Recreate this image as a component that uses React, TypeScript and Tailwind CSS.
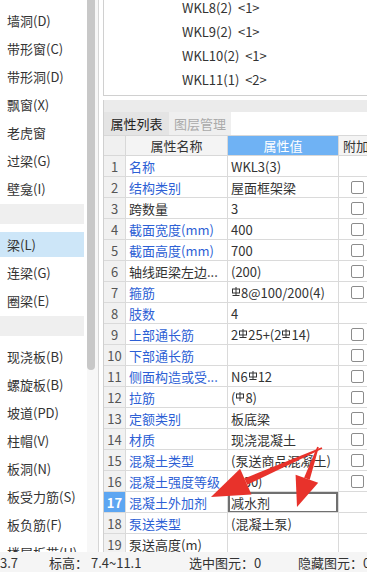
import React from "react";

const FONT = { fontFamily: '"Noto Sans CJK SC", "Microsoft YaHei", "Noto Sans", sans-serif' };

function Bar({ grade }: { grade: 3 | 4 }) {
  return (
    <svg width="8" height="10" viewBox="0 0 8 10" className="inline-block align-top mt-[1px] mx-[1px]">
      <rect x="0.5" y="2" width="7" height="4" fill="none" stroke="#333" strokeWidth="1" />
      <line x1="4" y1="0" x2="4" y2="9" stroke="#333" strokeWidth="1" />
      {grade === 4 && <line x1="0.5" y1="8.5" x2="7.5" y2="8.5" stroke="#333" strokeWidth="1" />}
    </svg>
  );
}

type Row = { n: number; name: string; blue: boolean; val: React.ReactNode; cb: boolean; sel?: boolean };

const rows: Row[] = [
  { n: 1, name: "名称", blue: true, val: "WKL3(3)", cb: false },
  { n: 2, name: "结构类别", blue: true, val: "屋面框架梁", cb: true },
  { n: 3, name: "跨数量", blue: false, val: "3", cb: true },
  { n: 4, name: "截面宽度(mm)", blue: true, val: "400", cb: true },
  { n: 5, name: "截面高度(mm)", blue: true, val: "700", cb: true },
  { n: 6, name: "轴线距梁左边...", blue: false, val: "(200)", cb: true },
  { n: 7, name: "箍筋", blue: true, val: (<span><Bar grade={4} />8@100/200(4)</span>), cb: true },
  { n: 8, name: "肢数", blue: true, val: "4", cb: false },
  { n: 9, name: "上部通长筋", blue: true, val: (<span>2<Bar grade={4} />25+(2<Bar grade={4} />14)</span>), cb: true },
  { n: 10, name: "下部通长筋", blue: true, val: "", cb: true },
  { n: 11, name: "侧面构造或受...", blue: true, val: (<span>N6<Bar grade={4} />12</span>), cb: true },
  { n: 12, name: "拉筋", blue: true, val: (<span>(<Bar grade={3} />8)</span>), cb: true },
  { n: 13, name: "定额类别", blue: true, val: "板底梁", cb: true },
  { n: 14, name: "材质", blue: true, val: "现浇混凝土", cb: true },
  { n: 15, name: "混凝土类型", blue: true, val: "(泵送商品混凝土)", cb: true },
  { n: 16, name: "混凝土强度等级", blue: true, val: "(C30)", cb: true },
  { n: 17, name: "混凝土外加剂", blue: true, val: "减水剂", cb: false, sel: true },
  { n: 18, name: "泵送类型", blue: true, val: "(混凝土泵)", cb: false },
  { n: 19, name: "泵送高度(m)", blue: false, val: "", cb: false },
];

type Side = { t: string; sel?: boolean } | { header: true };
const side: Side[] = [
  { t: "墙洞(D)" },
  { t: "带形窗(C)" },
  { t: "带形洞(D)" },
  { t: "飘窗(X)" },
  { t: "老虎窗" },
  { t: "过梁(G)" },
  { t: "壁龛(I)" },
  { header: true },
  { t: "梁(L)", sel: true },
  { t: "连梁(G)" },
  { t: "圈梁(E)" },
  { header: true },
  { t: "现浇板(B)" },
  { t: "螺旋板(B)" },
  { t: "坡道(PD)" },
  { t: "柱帽(V)" },
  { t: "板洞(N)" },
  { t: "板受力筋(S)" },
  { t: "板负筋(F)" },
  { t: "楼层板带(H)" },
];

export default function App() {
  return (
    <div className="relative w-[367px] h-[572px] overflow-hidden bg-white text-[13px] text-[#333]" style={FONT}>
      <div className="flex h-[552px] overflow-hidden">
        {/* sidebar */}
        <div className="w-[87px] h-[552px] shrink-0 pt-[6px] overflow-hidden">
          {side.map((s, i) =>
            "header" in s ? (
              <div key={i} className="h-[28px] pt-[2px] pr-[3px]">
                <div className="h-[20px] bg-[#efefef]" />
              </div>
            ) : (
              <div key={i} className="h-[28px] pt-[2px] pr-[3px]">
                <div className={`h-[25px] flex items-center pl-[7px] leading-none whitespace-nowrap ${s.sel ? "bg-[#cde6f8]" : ""}`}>
                  {s.t}
                </div>
              </div>
            )
          )}
        </div>
        {/* scrollbar */}
        <div className="w-[11px] shrink-0 bg-[#f7f7f7]">
          <div className="w-[8px] h-[370px] bg-[#c8c8c8] rounded-b-[4px]" />
        </div>
        <div className="w-[1px] shrink-0 bg-[#d6d6d6]" />
        <div className="w-[4px] shrink-0" />
        {/* right panel */}
        <div className="flex-1 min-w-0 flex flex-col overflow-hidden">
          <div className="h-[96px] shrink-0 border-l border-b border-[#d0d0d0] overflow-hidden">
            <div className="-mt-[5px] pl-[78px]">
              {["WKL8(2)  <1>", "WKL9(2)  <1>", "WKL10(2)  <1>", "WKL11(1)  <2>"].map((t) => (
                <div key={t} className="h-[24px] flex items-center leading-none whitespace-pre">
                  {t}
                </div>
              ))}
            </div>
          </div>
          <div className="h-[4px] shrink-0" />
          <div className="flex-1 border-l border-[#d0d0d0] flex flex-col overflow-hidden">
            <div className="h-[12px] shrink-0 bg-[#ebebeb]" />
            <div className="h-[23px] shrink-0 flex">
              <div className="w-[65px] bg-[#e4e4e4] flex items-center justify-center text-[#222] leading-none">属性列表</div>
              <div className="w-[62px] bg-[#efefef] flex items-center justify-center text-[#aaaaaa] leading-none">图层管理</div>
              <div className="flex-1 bg-white" />
            </div>
            {/* header */}
            <div className="h-[21px] shrink-0 flex border-b border-[#d8d8d8] border-t">
              <div className="w-[22px] shrink-0 bg-[#f0f0f0] border-r border-[#d8d8d8]" />
              <div className="w-[102px] shrink-0 bg-[#f4f4f4] border-r border-[#d8d8d8] flex items-center justify-center leading-none">属性名称</div>
              <div className="w-[111px] shrink-0 bg-[#6fb2f4] border-r border-[#d8d8d8] flex items-center justify-center text-white leading-none">属性值</div>
              <div className="flex-1 bg-[#f4f4f4] flex items-center pl-[4px] leading-none whitespace-nowrap overflow-hidden">附加</div>
            </div>
            {rows.map((r) => (
              <div key={r.n} className="h-[21px] shrink-0 flex border-b border-[#dadada]">
                <div className={`w-[22px] shrink-0 border-r border-[#dadada] flex items-center justify-center leading-none ${r.sel ? "bg-[#5da6f2] text-white font-bold" : "bg-[#f1f1f1] text-[#555]"}`}>
                  {r.n}
                </div>
                <div className={`w-[102px] shrink-0 border-r border-[#dadada] flex items-center pl-[3px] leading-none whitespace-nowrap overflow-hidden ${r.blue ? "text-[#2d5fd5]" : "text-[#333]"}`}>
                  {r.name}
                </div>
                <div className="w-[111px] shrink-0 border-r border-[#dadada] flex leading-none whitespace-nowrap overflow-hidden">
                  {r.sel ? (
                    <div className="flex-1 -mb-[1px] border-2 border-[#707070] flex items-center pl-[1px]">{r.val}</div>
                  ) : (
                    <div className="flex-1 flex items-center pl-[3px]">{r.val}</div>
                  )}
                </div>
                <div className="flex-1 flex items-center pl-[12px]">
                  {r.cb && <div className="w-[13px] h-[13px] border border-[#8c8c8c] rounded-[2px] bg-white" />}
                </div>
              </div>
            ))}
          </div>
        </div>
      </div>
      {/* status bar */}
      <div className="h-[20px] flex items-center bg-[#f5f5f5] leading-none whitespace-nowrap">
        <span className="w-[49px] shrink-0">3.7</span>
        <span className="w-[140px] shrink-0">标高： 7.4~11.1</span>
        <span className="w-[109px] shrink-0">选中图元：0</span>
        <span className="shrink-0">隐藏图元：0</span>
      </div>
      {/* red arrows overlay */}
      <svg className="absolute left-0 top-0 pointer-events-none" width="367" height="572" viewBox="0 0 367 572">
        <polygon points="322.3,448.7 247.2,484.8 244.4,478.4 321.7,447.3" fill="#e8322b" />
        <polygon points="211,497 240.1,468.8 251.5,494.4" fill="#e8322b" />
        <polygon points="318.8,447.3 309.7,479.7 304.1,477.7 317.2,446.7" fill="#e8322b" />
        <polygon points="297,507 295.6,474.7 318.2,482.7" fill="#e8322b" />
      </svg>
    </div>
  );
}
